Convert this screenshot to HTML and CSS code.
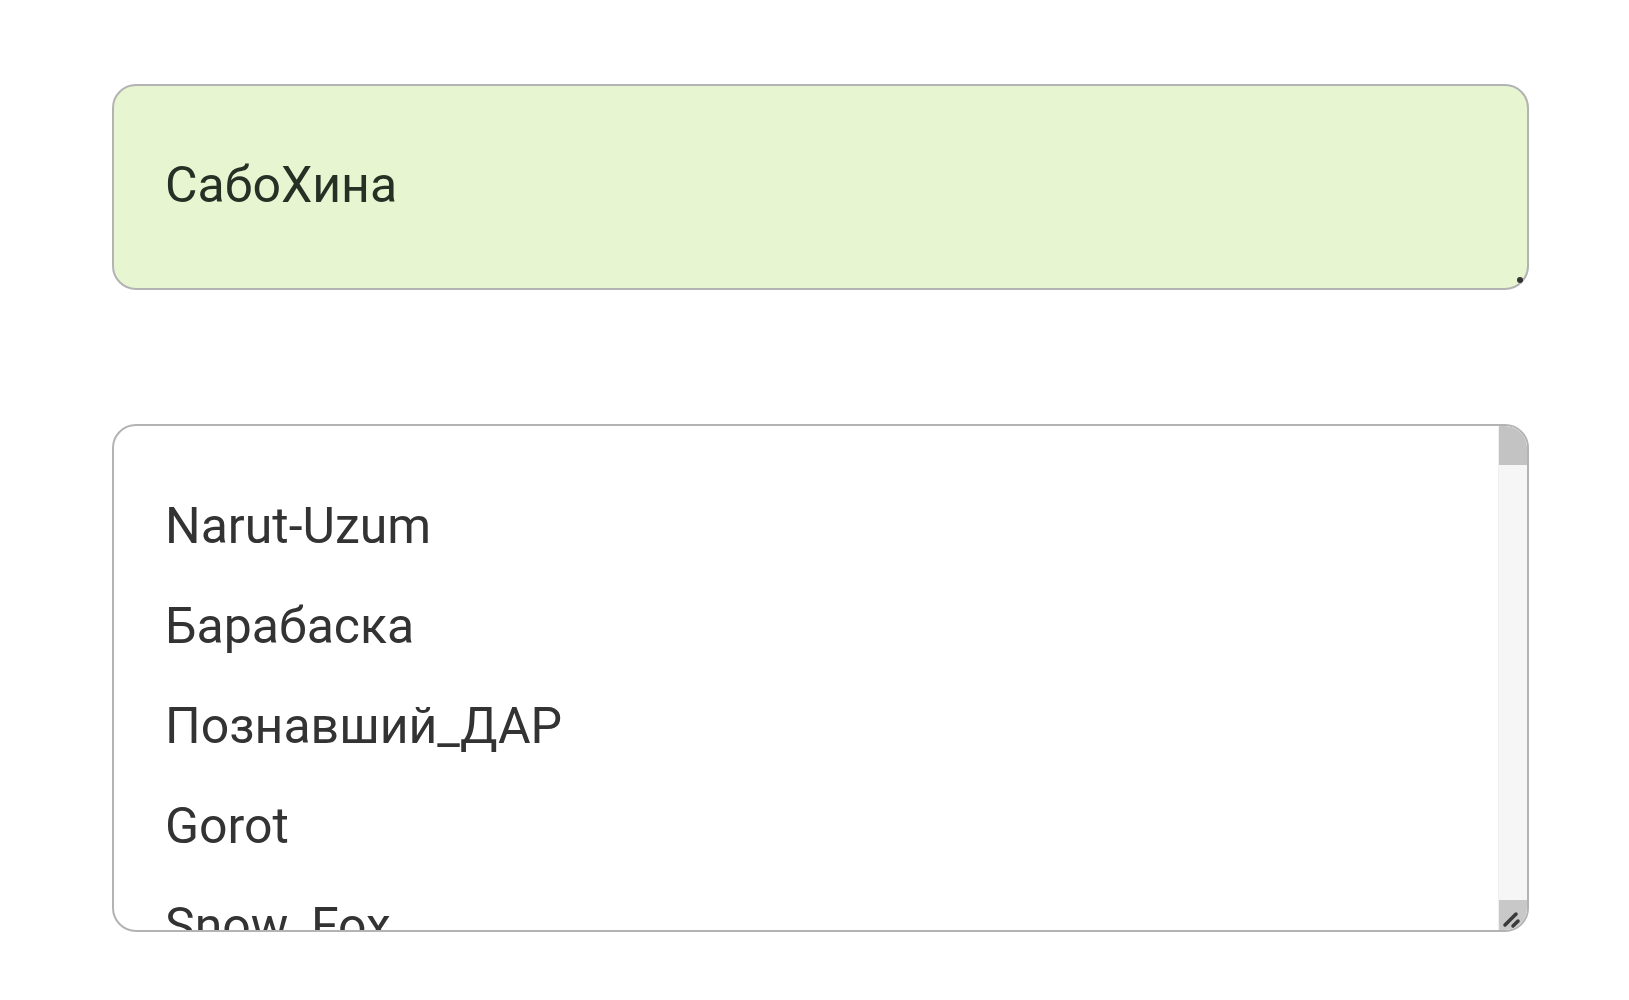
FILE: index.html
```html
<!DOCTYPE html>
<html lang="ru">
<head>
    <meta charset="UTF-8">
    <meta name="viewport" content="width=device-width, initial-scale=1.0">
    <title>Ники</title>
    <link rel="stylesheet" href="styles.css">
</head>
<body>
    <div class="page">
        <div class="field selected">СабоХина<span class="grip dot"></span></div>

        <div class="list">
            <div class="items">
                <div class="item">Narut-Uzum</div>
                <div class="item">Барабаска</div>
                <div class="item">Познавший_ДАР</div>
                <div class="item">Gorot</div>
                <div class="item">Snow_Fox</div>
            </div>
            <div class="scrollbar">
                <div class="thumb"></div>
                <div class="track"></div>
                <div class="resizer">
                    <svg width="28" height="30" viewBox="0 0 28 30">
                        <path d="M6 25 L17 14" stroke="#3a3a3a" stroke-width="3.5" stroke-linecap="round"/>
                        <path d="M14 26 L19 21" stroke="#3a3a3a" stroke-width="3.5" stroke-linecap="round"/>
                    </svg>
                </div>
            </div>
        </div>
    </div>
</body>
</html>
```

FILE: styles.css
```css
body {
    margin: 0;
    background: #fff;
    font-family: Roboto, "Noto Sans", sans-serif;
    color: #333;
}
.page {
    padding: 84px 0 0 112px;
    display: flex;
    flex-direction: column;
    gap: 134px;
}
.field {
    position: relative;
    box-sizing: border-box;
    width: 1417px;
    height: 206px;
    padding: 70px 51px 0;
    border: 2px solid #b3b3b3;
    border-radius: 24px;
    background: #e7f5d1;
    color: #283025;
    font-size: 50px;
    line-height: 58px;
}
.grip.dot {
    position: absolute;
    right: 4px;
    bottom: 5px;
    width: 6px;
    height: 6px;
    border-radius: 50%;
    background: #333;
}
.list {
    box-sizing: border-box;
    width: 1417px;
    height: 508px;
    border: 2px solid #b3b3b3;
    border-radius: 24px;
    display: flex;
    overflow: hidden;
}
.items {
    flex: 1;
    padding: 50px 51px 0;
    overflow: hidden;
}
.item {
    font-size: 50px;
    line-height: 100px;
    white-space: nowrap;
}
.scrollbar {
    width: 28px;
    display: flex;
    flex-direction: column;
    background: #f6f6f6;
    border-left: 1px solid #f0f0f0;
}
.thumb {
    height: 39px;
    background: #c3c3c3;
}
.track {
    flex: 1;
}
.resizer {
    height: 30px;
    background: #c8c8c8;
}
.resizer svg {
    display: block;
}
```
